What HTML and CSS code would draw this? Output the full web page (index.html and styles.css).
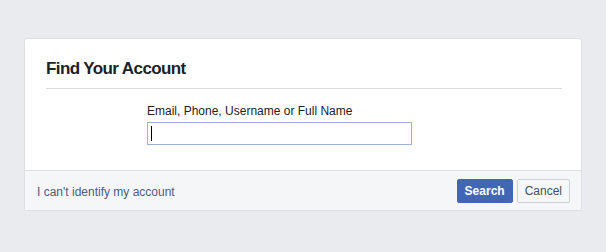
FILE: index.html
```html
<!DOCTYPE html>
<html>
<head>
<meta charset="utf-8">
<link rel="stylesheet" href="styles.css">
</head>
<body>
<div class="card">
  <div class="card-header">
    <h2 class="title">Find Your Account</h2>
  </div>
  <div class="card-body">
    <div class="label">Email, Phone, Username or Full Name</div>
    <div class="field"><span class="caret"></span></div>
  </div>
  <div class="card-footer">
    <a class="link">I can't identify my account</a>
    <div class="actions">
      <button class="btn btn-primary">Search</button>
      <button class="btn btn-default">Cancel</button>
    </div>
  </div>
</div>
</body>
</html>
```

FILE: styles.css
```css
html, body {
  margin: 0;
  padding: 0;
  background: #e9ebee;
  font-family: "Liberation Sans", Arial, sans-serif;
  font-size: 12px;
  color: #1d2129;
}
body {
  padding: 38px 0 0 24px;
}
.card {
  width: 556px;
  background: #fff;
  border: 1px solid #dddfe2;
  border-radius: 3px;
  overflow: hidden;
}
.card-header {
  margin: 0 19px 0 21px;
  padding: 20px 0 9px;
  border-bottom: 1px solid #dadde1;
}
.title {
  margin: 0;
  font-size: 17px;
  line-height: 20px;
  letter-spacing: -0.6px;
  font-weight: bold;
  color: #1d2129;
}
.card-body {
  padding: 14px 0 25px 122px;
}
.label {
  line-height: 16px;
  color: #1d2129;
}
.field {
  margin-top: 3px;
  width: 260px;
  height: 21px;
  border: 1px solid #9db0d6;
  background: #fff;
  display: flex;
  align-items: center;
  padding-left: 3px;
  box-sizing: content-box;
}
.caret {
  display: block;
  width: 1px;
  height: 15px;
  background: #000;
}
.card-footer {
  background: #f5f6f7;
  border-top: 1px solid #dddfe2;
  padding: 8px 11px 7px 12px;
  display: flex;
  align-items: center;
  justify-content: space-between;
}
.link {
  color: #4b5d80;
  line-height: 16px;
  padding-top: 1px;
}
.actions {
  display: flex;
  gap: 4px;
}
.btn {
  height: 24px;
  margin: 0;
  padding: 0 7px;
  font-family: "Liberation Sans", Arial, sans-serif;
  font-size: 12px;
  border-radius: 2px;
  line-height: 22px;
}
.btn-primary {
  background: #4267b2;
  border: 1px solid #4267b2;
  color: #fff;
  font-weight: bold;
}
.btn-default {
  background: #f6f7f9;
  border: 1px solid #ced0d4;
  color: #4b4f56;
  font-weight: normal;
}
```
